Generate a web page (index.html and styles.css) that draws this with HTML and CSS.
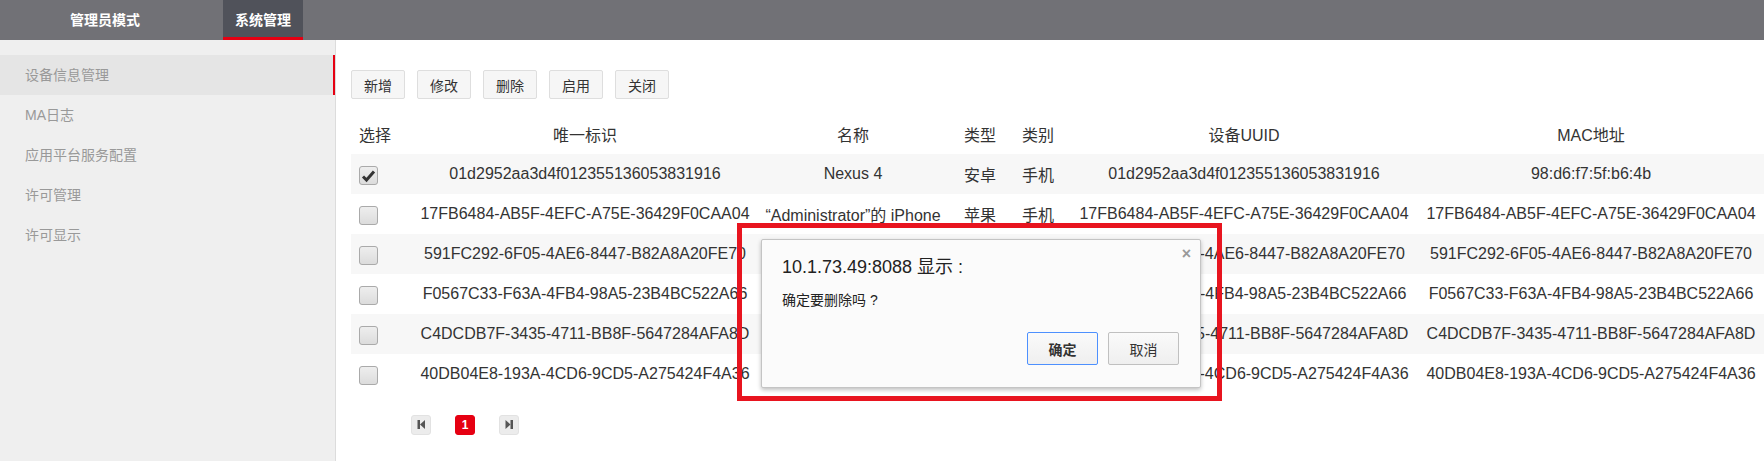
FILE: index.html
```html
<!DOCTYPE html>
<html lang="zh-CN">
<head>
<meta charset="utf-8">
<title>系统管理</title>
<link rel="stylesheet" href="styles.css">
</head>
<body>
<div class="topbar">
  <div class="tab tab-first">管理员模式</div>
  <div class="tab tab-active">系统管理</div>
</div>
<div class="main">
  <aside class="sidebar">
    <div class="side-item active">设备信息管理</div>
    <div class="side-item">MA日志</div>
    <div class="side-item">应用平台服务配置</div>
    <div class="side-item">许可管理</div>
    <div class="side-item">许可显示</div>
  </aside>
  <section class="content">
    <div class="toolbar">
      <button class="tbtn">新增</button>
      <button class="tbtn">修改</button>
      <button class="tbtn">删除</button>
      <button class="tbtn">启用</button>
      <button class="tbtn">关闭</button>
    </div>
    <table class="grid">
      <colgroup>
        <col class="c1"><col class="c2"><col class="c3"><col class="c4"><col class="c5"><col class="c6"><col class="c7">
      </colgroup>
      <thead>
        <tr><th class="sel">选择</th><th>唯一标识</th><th>名称</th><th>类型</th><th>类别</th><th>设备UUID</th><th class="last">MAC地址</th></tr>
      </thead>
      <tbody>
        <tr class="odd"><td class="sel"><span class="cb checked"><svg viewBox="0 0 19 19" width="19" height="19"><path d="M4 10.5 L7.5 14 L15 5.5" fill="none" stroke="#333" stroke-width="3"/></svg></span></td><td>01d2952aa3d4f012355136053831916</td><td>Nexus 4</td><td>安卓</td><td>手机</td><td>01d2952aa3d4f012355136053831916</td><td class="last">98:d6:f7:5f:b6:4b</td></tr>
        <tr><td class="sel"><span class="cb"></span></td><td>17FB6484-AB5F-4EFC-A75E-36429F0CAA04</td><td>“Administrator”的 iPhone</td><td>苹果</td><td>手机</td><td>17FB6484-AB5F-4EFC-A75E-36429F0CAA04</td><td class="last">17FB6484-AB5F-4EFC-A75E-36429F0CAA04</td></tr>
        <tr class="odd"><td class="sel"><span class="cb"></span></td><td>591FC292-6F05-4AE6-8447-B82A8A20FE70</td><td></td><td></td><td></td><td>591FC292-6F05-4AE6-8447-B82A8A20FE70</td><td class="last">591FC292-6F05-4AE6-8447-B82A8A20FE70</td></tr>
        <tr><td class="sel"><span class="cb"></span></td><td>F0567C33-F63A-4FB4-98A5-23B4BC522A66</td><td></td><td></td><td></td><td>F0567C33-F63A-4FB4-98A5-23B4BC522A66</td><td class="last">F0567C33-F63A-4FB4-98A5-23B4BC522A66</td></tr>
        <tr class="odd"><td class="sel"><span class="cb"></span></td><td>C4DCDB7F-3435-4711-BB8F-5647284AFA8D</td><td></td><td></td><td></td><td>C4DCDB7F-3435-4711-BB8F-5647284AFA8D</td><td class="last">C4DCDB7F-3435-4711-BB8F-5647284AFA8D</td></tr>
        <tr><td class="sel"><span class="cb"></span></td><td>40DB04E8-193A-4CD6-9CD5-A275424F4A36</td><td></td><td></td><td></td><td>40DB04E8-193A-4CD6-9CD5-A275424F4A36</td><td class="last">40DB04E8-193A-4CD6-9CD5-A275424F4A36</td></tr>
      </tbody>
    </table>
    <div class="pager">
      <span class="pg"><svg viewBox="0 0 20 20" width="20" height="20"><rect x="6.5" y="5" width="2.5" height="9" fill="#555"/><polygon points="14,5 9,9.5 14,14" fill="#555"/></svg></span>
      <span class="pg current">1</span>
      <span class="pg"><svg viewBox="0 0 20 20" width="20" height="20"><polygon points="6.5,5 11.5,9.5 6.5,14" fill="#555"/><rect x="11.5" y="5" width="2.5" height="9" fill="#555"/></svg></span>
    </div>
  </section>
</div>

<div class="mark">
  <div class="dialog">
    <span class="close">×</span>
    <div class="dlg-title">10.1.73.49:8088 显示 :</div>
    <div class="dlg-msg">确定要删除吗 ?</div>
    <div class="dlg-actions">
      <button class="dbtn primary">确定</button>
      <button class="dbtn">取消</button>
    </div>
  </div>
</div>
</body>
</html>
```

FILE: styles.css
```css
* { box-sizing: border-box; }
html, body {
  margin: 0;
  height: 461px;
  overflow: hidden;
  background: #fff;
  font-family: "Liberation Sans", "Noto Sans CJK SC", sans-serif;
  color: #333;
}

.topbar {
  height: 40px;
  background: #717176;
  display: flex;
  padding-left: 40px;
}
.tab {
  height: 40px;
  line-height: 40px;
  color: #fff;
  font-size: 14px;
  font-weight: bold;
  text-align: center;
}
.tab-first { width: 130px; }
.tab-active {
  width: 80px;
  margin-left: 53px;
  background: #50525a;
  box-shadow: inset 0 -3px 0 #e60012;
}

.main {
  display: flex;
  height: 421px;
}
.sidebar {
  width: 336px;
  flex: none;
  background: #efefef;
  border-right: 1px solid #dcdcdc;
  padding-top: 15px;
}
.side-item {
  height: 40px;
  line-height: 40px;
  padding-left: 25px;
  font-size: 14px;
  color: #999;
}
.side-item.active {
  background: #e5e5e5;
  box-shadow: inset -2px 0 0 #e60012;
}

.content {
  flex: 1;
  overflow: hidden;
  padding: 30px 0 0 15px;
}
.toolbar {
  display: flex;
  gap: 12px;
}
.tbtn {
  width: 54px;
  height: 29px;
  padding: 0;
  border: 1px solid #dedede;
  border-radius: 2px;
  background: #f6f6f6;
  font-family: inherit;
  font-size: 14px;
  color: #333;
}

.grid {
  margin-top: 15px;
  border-collapse: collapse;
  table-layout: fixed;
  width: 1420px;
}
.c1 { width: 60px; }
.c2 { width: 348px; }
.c3 { width: 188px; }
.c4 { width: 66px; }
.c5 { width: 50px; }
.c6 { width: 362px; }
.c7 { width: 346px; }
.grid th, .grid td {
  height: 40px;
  padding: 0;
  text-align: center;
  font-size: 16px;
  font-weight: normal;
  color: #333;
  white-space: nowrap;
  overflow: visible;
}
.grid .sel {
  text-align: left;
  padding-left: 8px;
}
.grid .last { padding-right: 14px; }
.grid tr.odd td { background: #f7f7f7; }

.cb {
  display: inline-block;
  width: 19px;
  height: 19px;
  vertical-align: middle;
  margin-top: 2px;
  border: 1px solid #aaa;
  border-radius: 3px;
  background: linear-gradient(#eeeeee, #dcdcdc);
}
.cb svg { display: block; margin: -1px 0 0 -1px; }

.pager {
  display: flex;
  gap: 24px;
  margin-top: 21px;
  padding-left: 60px;
}
.pg {
  width: 20px;
  height: 20px;
  border-radius: 3px;
  background: #ececec;
  border: 1px solid #e2e2e2;
  display: flex;
  align-items: center;
  justify-content: center;
}
.pg svg { display: block; margin: -1px; }
.pg.current {
  background: #e60012;
  border-color: #e60012;
  color: #fff;
  font-size: 12px;
  font-weight: bold;
}

.mark {
  position: absolute;
  left: 737px;
  top: 223px;
  width: 485px;
  height: 178px;
  border: 5px solid #e8141f;
  padding: 11px 0 0 19px;
}
.dialog {
  position: relative;
  width: 440px;
  height: 149px;
  background: #fbfbfb;
  border: 1px solid #c4c4c4;
  border-radius: 2px;
  box-shadow: 0 2px 4px rgba(0, 0, 0, 0.25);
  padding: 16px 21px 0 20px;
}
.close {
  position: absolute;
  right: 9px;
  top: 5px;
  font-size: 16px;
  font-weight: bold;
  color: #999;
}
.dlg-title {
  font-size: 18px;
  line-height: 22px;
  color: #222;
}
.dlg-msg {
  margin-top: 12px;
  font-size: 14px;
  line-height: 20px;
  color: #222;
}
.dlg-actions {
  display: flex;
  justify-content: flex-end;
  gap: 10px;
  margin-top: 22px;
}
.dbtn {
  width: 71px;
  height: 33px;
  padding: 0;
  border: 1px solid #c0c0c0;
  border-radius: 2px;
  background: linear-gradient(#fafafa, #efefef);
  font-family: inherit;
  font-size: 14px;
  color: #333;
}
.dbtn.primary {
  border-color: #4d90fe;
  font-weight: bold;
}
```
